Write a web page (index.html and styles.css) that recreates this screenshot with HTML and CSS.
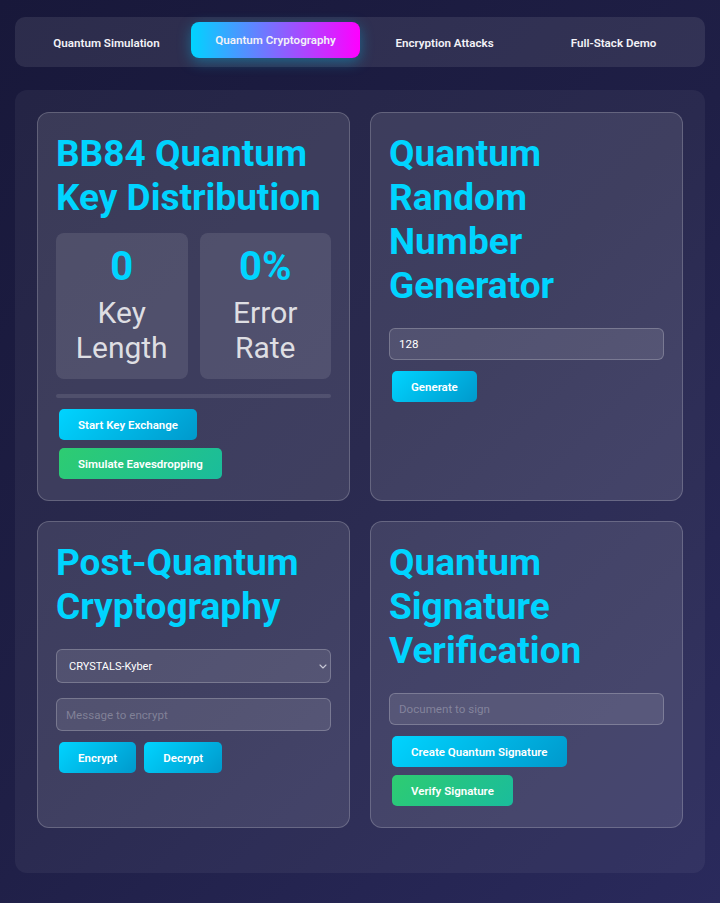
FILE: index.html
```html
<!DOCTYPE html>
<html lang="en">
<head>
<meta charset="utf-8">
<title>Quantum Cryptography</title>
<link rel="stylesheet" href="styles.css">
</head>
<body>
  <nav class="tabs">
    <button class="tab">Quantum Simulation</button>
    <button class="tab active">Quantum Cryptography</button>
    <button class="tab">Encryption Attacks</button>
    <button class="tab">Full-Stack Demo</button>
  </nav>

  <main class="panel">
    <div class="grid">
      <section class="card">
        <h2>BB84 Quantum Key Distribution</h2>
        <div class="stats">
          <div class="stat">
            <div class="stat-value">0</div>
            <div class="stat-label">Key Length</div>
          </div>
          <div class="stat">
            <div class="stat-value">0%</div>
            <div class="stat-label">Error Rate</div>
          </div>
        </div>
        <div class="progress"><div class="progress-fill" style="width:0%"></div></div>
        <div class="actions">
          <button class="btn">Start Key Exchange</button>
          <button class="btn btn-green">Simulate Eavesdropping</button>
        </div>
      </section>

      <section class="card">
        <h2>Quantum Random Number Generator</h2>
        <input class="field" type="text" value="128">
        <div class="actions">
          <button class="btn">Generate</button>
        </div>
      </section>

      <section class="card">
        <h2>Post-Quantum Cryptography</h2>
        <div class="select-wrap">
          <select class="field field-select">
            <option>CRYSTALS-Kyber</option>
            <option>CRYSTALS-Dilithium</option>
            <option>FALCON</option>
          </select>
          <svg class="chevron" width="8" height="5" viewBox="0 0 8 5" aria-hidden="true"><path d="M1 1l3 3 3-3" fill="none" stroke="#c9c9d6" stroke-width="1.1" stroke-linecap="round" stroke-linejoin="round"/></svg>
        </div>
        <input class="field field-msg" type="text" placeholder="Message to encrypt">
        <div class="actions">
          <button class="btn">Encrypt</button>
          <button class="btn">Decrypt</button>
        </div>
      </section>

      <section class="card">
        <h2>Quantum Signature Verification</h2>
        <input class="field" type="text" placeholder="Document to sign">
        <div class="actions">
          <button class="btn">Create Quantum Signature</button>
          <button class="btn btn-green">Verify Signature</button>
        </div>
      </section>
    </div>
  </main>
</body>
</html>
```

FILE: styles.css
```css
* { box-sizing: border-box; }

html, body { height: 100%; }

body {
  margin: 0;
  padding: 17px 15px;
  font-family: Roboto, "Noto Sans", sans-serif;
  color: #fff;
  background: linear-gradient(135deg, #18183a 0%, #1f1f46 50%, #2a2a5c 100%);
  background-attachment: fixed;
}

.tabs {
  display: flex;
  padding: 7px;
  border-radius: 10px;
  background: rgba(255, 255, 255, 0.09);
  margin-bottom: 23px;
}

.tab {
  flex: 1;
  height: 36px;
  padding: 1px 0 0;
  border: 0;
  border-radius: 8px;
  background: transparent;
  color: #f2f2f7;
  font-family: Roboto, sans-serif;
  font-size: 11.6px;
  font-weight: 600;
  cursor: pointer;
}

.tab.active {
  padding: 0;
  background: linear-gradient(90deg, #00d4ff 0%, #ff00ff 100%);
  transform: translateY(-2px);
  box-shadow: 0 4px 14px rgba(0, 212, 255, 0.35);
}

.panel {
  padding: 22px 22px 45px;
  border-radius: 12px;
  background: rgba(255, 255, 255, 0.05);
}

.grid {
  display: grid;
  grid-template-columns: 1fr 1fr;
  gap: 20px;
}

.card {
  display: flex;
  flex-direction: column;
  padding: 18px;
  border-radius: 12px;
  border: 1px solid rgba(255, 255, 255, 0.2);
  background: rgba(255, 255, 255, 0.1);
}

.card h2 {
  margin: 1px 0 13px;
  font-size: 37px;
  font-weight: 700;
  line-height: 44px;
  color: #00d4ff;
}

.stats {
  display: grid;
  grid-template-columns: 1fr 1fr;
  gap: 12px;
}

.stat {
  padding: 10px 8px 14px;
  border-radius: 8px;
  background: rgba(255, 255, 255, 0.1);
  text-align: center;
}

.stat-value {
  font-size: 40px;
  font-weight: 700;
  line-height: 47px;
  color: #00d4ff;
  margin-bottom: 5px;
}

.stat-label {
  font-size: 30px;
  line-height: 35px;
  color: rgba(255, 255, 255, 0.82);
}

.progress {
  height: 4px;
  margin: 15px 0 7px;
  border-radius: 3px;
  background: rgba(255, 255, 255, 0.1);
  overflow: hidden;
}

.progress-fill {
  height: 100%;
  background: linear-gradient(90deg, #00d4ff, #ff00ff);
}

.field {
  display: block;
  width: 100%;
  height: 32px;
  margin: 7px 0;
  padding: 0 9px;
  border: 1px solid rgba(255, 255, 255, 0.22);
  border-radius: 6px;
  background: rgba(255, 255, 255, 0.1);
  color: #fff;
  font-family: Roboto, sans-serif;
  font-size: 11.6px;
  outline: none;
}

.field::placeholder { color: rgba(255, 255, 255, 0.28); }

.select-wrap {
  position: relative;
  margin: 7px 0 7px;
}

.field-select {
  height: 34px;
  margin: 0;
  padding: 0 12px;
  font-size: 11px;
  appearance: none;
  -webkit-appearance: none;
}

.field-select option { background: #2d2c4a; color: #fff; }

.chevron {
  position: absolute;
  right: 4px;
  top: 15px;
}

.field-msg {
  height: 33px;
  margin-top: 8px;
}

.actions {
  display: flex;
  flex-wrap: wrap;
  align-items: flex-start;
  gap: 8px;
  padding: 4px 3px 3px;
}

.btn {
  height: 31px;
  padding: 0 19px;
  border: 0;
  border-radius: 5px;
  background: linear-gradient(135deg, #00d4ff 0%, #0099cc 100%);
  color: #fff;
  font-family: Roboto, sans-serif;
  font-size: 11.5px;
  font-weight: 600;
  cursor: pointer;
}

.btn-green {
  background: linear-gradient(135deg, #2ecc71 0%, #1abc9c 100%);
}
```
